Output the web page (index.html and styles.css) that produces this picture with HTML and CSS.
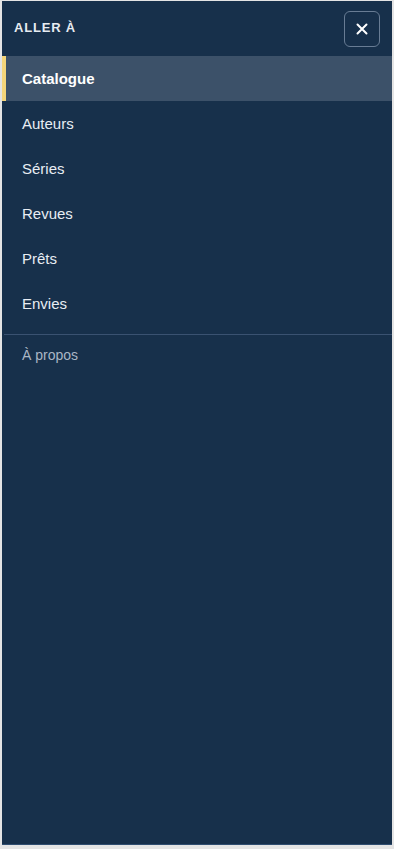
FILE: index.html
```html
<!DOCTYPE html>
<html lang="fr">
<head>
  <meta charset="UTF-8">
  <meta name="viewport" content="width=device-width, initial-scale=1.0">
  <title>Menu</title>
  <link rel="stylesheet" href="styles.css">
</head>
<body>

  <!-- Drawer -->
  <div class="drawer">
    <div class="drawer-head">
      <span class="drawer-title">Aller à</span>
      <button class="close-btn" aria-label="Fermer">
        <svg width="14" height="14" viewBox="0 0 14 14">
          <path d="M2.5 2.5 L11.5 11.5 M11.5 2.5 L2.5 11.5" stroke="#fff" stroke-width="2" stroke-linecap="round"/>
        </svg>
      </button>
    </div>

    <nav class="menu">
      <a href="#" class="menu-item active">Catalogue</a>
      <a href="#" class="menu-item">Auteurs</a>
      <a href="#" class="menu-item">Séries</a>
      <a href="#" class="menu-item">Revues</a>
      <a href="#" class="menu-item">Prêts</a>
      <a href="#" class="menu-item">Envies</a>
    </nav>

    <div class="menu-foot">
      <a href="#" class="about">À propos</a>
    </div>
  </div>

</body>
</html>
```

FILE: styles.css
```css
/* Basic Styles */
body {
  font-family: "Liberation Sans", Arial, sans-serif;
  margin: 0;
  padding: 0;
  background-color: #e4e4e4;
}

/* Drawer */
.drawer {
  margin: 1px 2px 0 2px;
  height: 843px;
  background-color: #17304b;
  border-bottom: 1px solid #2f4d70;
  display: flex;
  flex-direction: column;
}

.drawer-head {
  height: 55px;
  display: flex;
  align-items: center;
  justify-content: space-between;
  padding: 0 12px 0 12px;
}

.drawer-title {
  color: #e6ebf1;
  font-size: 13px;
  font-weight: bold;
  text-transform: uppercase;
  letter-spacing: 0.8px;
  margin-top: -2px;
}

.close-btn {
  width: 36px;
  height: 36px;
  border: 1px solid #687c94;
  border-radius: 6px;
  background: transparent;
  display: flex;
  align-items: center;
  justify-content: center;
  padding: 0;
  cursor: pointer;
}

/* Menu Links */
.menu {
  display: flex;
  flex-direction: column;
  padding-bottom: 8px;
}

.menu-item {
  display: block;
  height: 45px;
  line-height: 45px;
  padding-left: 16px;
  border-left: 4px solid transparent;
  color: #e8edf3;
  font-size: 15px;
  text-decoration: none;
}

.menu-item.active {
  background-color: #3c5169;
  border-left-color: #f4d57a;
  color: #ffffff;
  font-weight: bold;
}

.menu-foot {
  margin-left: 2px;
  border-top: 1px solid #3a5271;
  padding-top: 12px;
}

.about {
  display: block;
  padding-left: 18px;
  color: #aab6c5;
  font-size: 14px;
  text-decoration: none;
}
```
